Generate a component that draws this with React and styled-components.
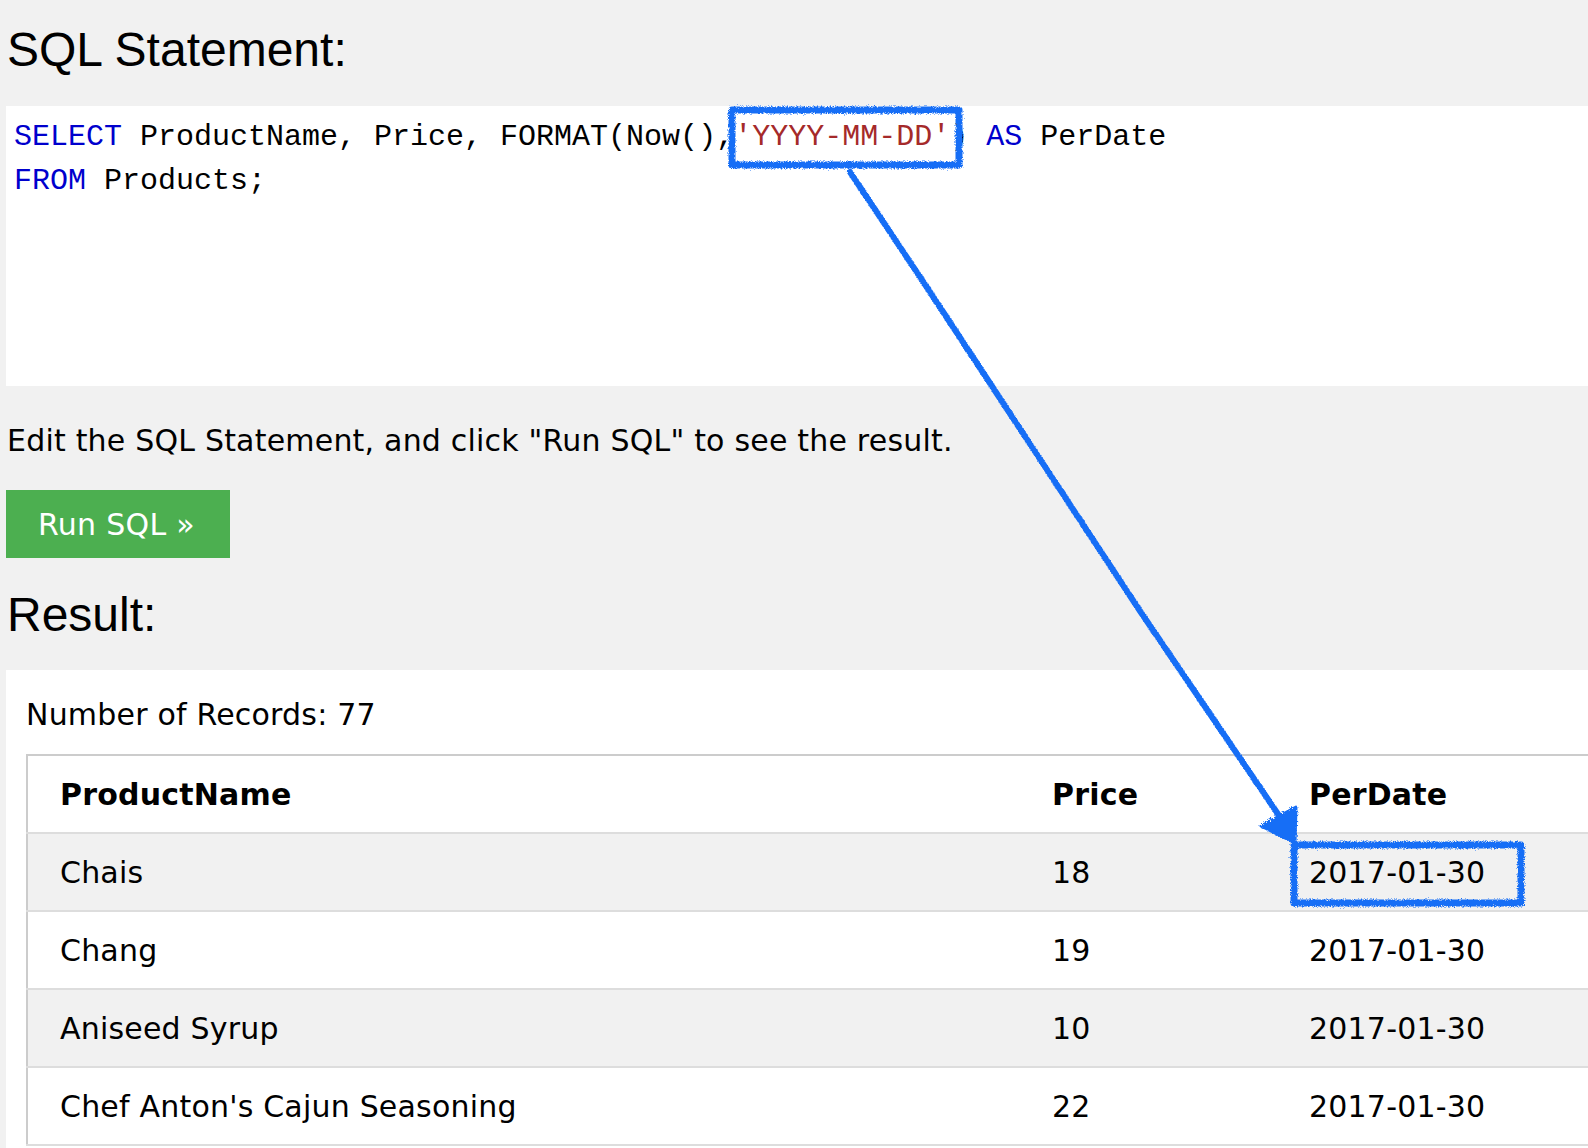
import React from 'react';
import styled, { createGlobalStyle } from 'styled-components';

const GlobalStyle = createGlobalStyle`
  html, body {
    margin: 0;
    padding: 0;
    overflow: hidden;
    background-color: #f1f1f1;
  }
`;

const Page = styled.div`
  position: relative;
  width: 1640px;
  padding: 22px 0 0 6px;
  font-family: Verdana, 'DejaVu Sans', sans-serif;
  letter-spacing: 0.2px;
  color: #000;
`;

const Heading = styled.h2`
  margin: ${(props) => props.margin || '0'};
  padding-left: 1px;
  font-family: 'Liberation Sans', Arial, sans-serif;
  font-weight: normal;
  font-size: 48px;
  line-height: 56px;
  letter-spacing: 0;
`;

const CodeBox = styled.div`
  margin-top: 28px;
  height: 280px;
  box-sizing: border-box;
  padding: 9px 8px 0;
  background-color: #fff;
  font-family: 'Liberation Mono', 'Courier New', monospace;
  font-size: 30px;
  line-height: 44px;
  letter-spacing: 0;
  white-space: pre;
`;

const CodeLine = styled.div``;

const Keyword = styled.span`
  color: #0000cd;
`;

const Str = styled.span`
  color: #a52a2a;
`;

const Hint = styled.p`
  margin: 37px 0 0 1px;
  font-size: 30px;
  line-height: 36px;
`;

const RunButton = styled.button`
  display: block;
  margin-top: 31px;
  width: 224px;
  height: 68px;
  padding: 0 0 0 32px;
  border: none;
  background-color: #4caf50;
  color: #fff;
  text-align: left;
  font-family: Verdana, 'DejaVu Sans', sans-serif;
  font-size: 30px;
  letter-spacing: 0.3px;
  cursor: pointer;
`;

const ResultBox = styled.div`
  margin-top: 27px;
  padding: 27px 0 0 20px;
  background-color: #fff;
  height: 520px;
`;

const Records = styled.div`
  font-size: 30px;
  line-height: 36px;
`;

const Table = styled.table`
  margin-top: 21px;
  width: 1600px;
  border-collapse: collapse;
  table-layout: fixed;
  border: 2px solid #ccc;
  font-size: 30px;
`;

const Row = styled.tr`
  background-color: ${(props) => (props.shaded ? '#f1f1f1' : '#fff')};
  border-bottom: 2px solid #ddd;
`;

const Cell = styled.td`
  padding: 22px 16px 20px ${(props) => (props.first ? '32px' : '16px')};
  line-height: 34px;
  text-align: left;
  font-weight: ${(props) => (props.head ? 'bold' : 'normal')};
  width: ${(props) => props.w || 'auto'};
  box-sizing: border-box;
  white-space: nowrap;
`;

const Overlay = styled.svg`
  position: absolute;
  top: 0;
  left: 0;
  width: 1588px;
  height: 1148px;
  pointer-events: none;
`;

const rows = [
  ['Chais', '18', '2017-01-30'],
  ['Chang', '19', '2017-01-30'],
  ['Aniseed Syrup', '10', '2017-01-30'],
  ["Chef Anton's Cajun Seasoning", '22', '2017-01-30'],
];

const ink = '#176ef6';

const Annotations = () => (
  <Overlay viewBox="0 0 1588 1148">
    <defs>
      <filter id="crayon" x="-5%" y="-5%" width="110%" height="110%">
        <feTurbulence type="fractalNoise" baseFrequency="1.3" numOctaves="2" result="noise" />
        <feDisplacementMap in="SourceGraphic" in2="noise" scale="5" />
      </filter>
    </defs>
    <g filter="url(#crayon)" stroke={ink} fill="none" strokeLinejoin="round">
      <rect x="732" y="110" width="227" height="55" strokeWidth="7" />
      <path d="M850 172 L 930 292 L 1005 406 L 1140 611 L 1282 820" strokeWidth="6" strokeLinecap="round" />
      <polygon points="1296,807 1261,826 1295,843" fill={ink} strokeWidth="3" />
      <rect x="1294" y="845" width="227" height="58" strokeWidth="7" />
    </g>
  </Overlay>
);

const App = () => (
  <>
    <GlobalStyle />
    <Page>
      <Heading>SQL Statement:</Heading>
      <CodeBox>
        <CodeLine>
          <Keyword>SELECT</Keyword> ProductName, Price, FORMAT(Now(),<Str>'YYYY-MM-DD'</Str>) <Keyword>AS</Keyword> PerDate
        </CodeLine>
        <CodeLine>
          <Keyword>FROM</Keyword> Products;
        </CodeLine>
      </CodeBox>
      <Hint>Edit the SQL Statement, and click "Run SQL" to see the result.</Hint>
      <RunButton>Run SQL »</RunButton>
      <Heading margin="29px 0 0">Result:</Heading>
      <ResultBox>
        <Records>Number of Records: 77</Records>
        <Table>
          <tbody>
            <Row>
              <Cell head first w="1009px">ProductName</Cell>
              <Cell head w="257px">Price</Cell>
              <Cell head>PerDate</Cell>
            </Row>
            {rows.map((r, i) => (
              <Row key={r[0]} shaded={i % 2 === 0}>
                <Cell first>{r[0]}</Cell>
                <Cell>{r[1]}</Cell>
                <Cell>{r[2]}</Cell>
              </Row>
            ))}
          </tbody>
        </Table>
      </ResultBox>
      <Annotations />
    </Page>
  </>
);

export default App;
